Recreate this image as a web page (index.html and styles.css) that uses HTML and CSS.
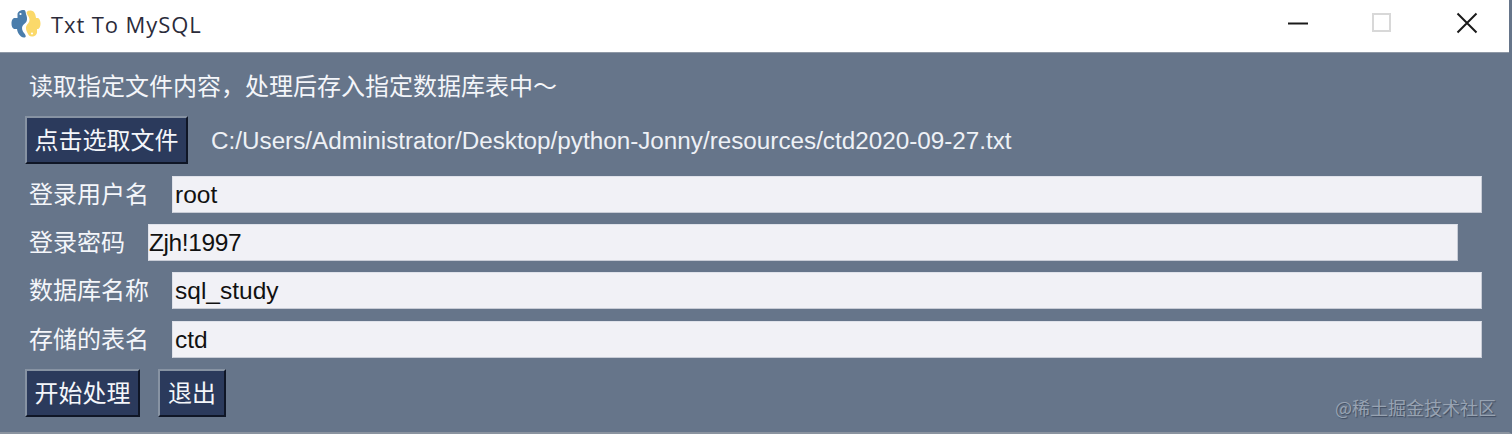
FILE: index.html
```html
<!DOCTYPE html>
<html lang="zh">
<head>
<meta charset="utf-8">
<title>Txt To MySQL</title>
<link rel="stylesheet" href="styles.css">
</head>
<body>
<div class="window">
  <header class="titlebar">
    <svg class="logo" width="30" height="30" viewBox="0 0 30 30">
      <path class="py-blue" d="M13 1c-4 0-6.500 1.800-6.500 4.500V9H3.800C1.500 9 .5 11.500 .5 14.500c0 3 1.300 5.500 3.300 5.500H6c.3 2.500 1.500 5.500 4 7.500 1.600 1.200 3.500 1.500 4.500.5 .8-1-.3-2.500-1.500-4-1.500-2-2.700-4.500-1.500-7 1-2 3-2.500 4-4.500 1-2.500.5-5-.5-7.500C14.600 2.600 14.200 1 13 1z"/>
      <path class="py-yellow" d="M19 1.500c-2.500.2-4 1.500-3 3.500 1 2 2.500 3.500 2.500 6 0 2.800-2.300 4-3.200 6-1 2.500.2 5 1.200 7 .8 1.800 1.800 3.500 4.500 3.500 3 0 5-2 5-4.500V20h.8c1.500 0 2.700-2.500 2.700-5.500S28.300 9 26.500 9H25c-.3-3-1.500-7.900-6-7.500z"/>
      <circle class="py-eye" cx="9.500" cy="5" r="1.100"/>
      <circle class="py-eye" cx="21" cy="24.500" r="1.100"/>
    </svg>
    <span class="title">Txt To MySQL</span>
    <div class="controls">
      <svg class="ctl" width="22" height="22" viewBox="0 0 22 22"><path class="stroke-dark" d="M1 11.500h20"/></svg>
      <svg class="ctl ctl-max" width="20" height="20" viewBox="0 0 20 20"><rect class="stroke-muted" x="1" y="1" width="17" height="17"/></svg>
      <svg class="ctl" width="22" height="22" viewBox="0 0 22 22"><path class="stroke-dark" d="M1.500 1.500l19 19M20.500 1.500l-19 19"/></svg>
    </div>
  </header>
  <main class="app">
    <p class="intro">读取指定文件内容，处理后存入指定数据库表中～</p>
    <div class="file-row">
      <button class="btn btn-file">点击选取文件</button>
      <span class="path">C:/Users/Administrator/Desktop/python-Jonny/resources/ctd2020-09-27.txt</span>
    </div>
    <div class="field field-long">
      <label class="label">登录用户名</label>
      <div class="input">root</div>
    </div>
    <div class="field field-short">
      <label class="label">登录密码</label>
      <div class="input input-tight">Zjh!1997</div>
    </div>
    <div class="field field-long">
      <label class="label">数据库名称</label>
      <div class="input">sql_study</div>
    </div>
    <div class="field field-long field-last">
      <label class="label">存储的表名</label>
      <div class="input">ctd</div>
    </div>
    <div class="actions">
      <button class="btn btn-start">开始处理</button>
      <button class="btn btn-exit">退出</button>
    </div>
    <span class="watermark">@稀土掘金技术社区</span>
  </main>
</div>
</body>
</html>
```
FILE: styles.css
```css
* { box-sizing: border-box; }
html, body { margin: 0; padding: 0; height: 434px; overflow: hidden; background: #66758a; }
.window {
  width: 1512px;
  height: 434px;
  display: flex;
  flex-direction: column;
  font-family: "Liberation Sans", "Noto Sans CJK SC", sans-serif;
}
.titlebar {
  height: 53px;
  flex: none;
  display: flex;
  align-items: center;
  background: #fff;
  padding-left: 11px;
  border-bottom: 1px solid #8e98a6;
  margin-right: 3px;
}
.logo { flex: none; margin-top: -5px; }
.py-blue { fill: #4a7dab; }
.py-yellow { fill: #fbd96a; }
.py-eye { fill: #fff; }
.title {
  margin-left: 10px;
  margin-top: -5px;
  font-family: "Open Sans", sans-serif;
  font-size: 22px;
  letter-spacing: 0.9px;
  color: #2b2b3a;
}
.controls {
  margin-left: auto;
  margin-top: -7px;
  display: flex;
  align-items: center;
  padding-right: 31px;
}
.ctl { flex: none; margin-left: 63px; }
.ctl-max { margin-right: 1px; }
.stroke-dark { fill: none; stroke: #1a1a1a; stroke-width: 2; }
.stroke-muted { fill: none; stroke: #d8d8d8; stroke-width: 2; }
.app {
  position: relative;
  flex: 1;
  padding: 0 0 0 25px;
  background: #66758a;
  border-right: 3px solid #66758a;
  border-bottom: 2px solid #8a939f;
  color: #f4f6fa;
}
.intro {
  margin: 16px 0 0 4px;
  height: 32px;
  line-height: 32px;
  font-family: "Noto Sans CJK SC", sans-serif;
  font-size: 24px;
}
.file-row {
  display: flex;
  align-items: center;
  margin-top: 15px;
  height: 48px;
}
.path {
  margin-left: 23px;
  padding-top: 2px;
  font-size: 24.250px;
  color: #eef1f6;
}
.btn {
  height: 48px;
  padding: 0 0 3px;
  font-family: "Noto Sans CJK SC", sans-serif;
  font-size: 24px;
  color: #f4f6fa;
  background: #2b3a5c;
  border-style: solid;
  border-width: 2px;
  border-color: #8793a3 #0f1626 #0f1626 #8793a3;
}
.btn-file { width: 163px; }
.btn-start { width: 115px; }
.btn-exit { width: 68px; }
.field {
  display: flex;
  align-items: center;
  height: 37px;
  margin-top: 11px;
  padding-left: 4px;
}
.file-row + .field { margin-top: 12px; }
.field-last { margin-top: 12px; }
.label {
  flex: none;
  padding-bottom: 3px;
  font-family: "Noto Sans CJK SC", sans-serif;
  font-size: 24px;
  line-height: 34px;
}
.field-long .label { width: 143px; }
.field-short .label { width: 119px; }
.input {
  width: 1310px;
  height: 37px;
  line-height: 35px;
  padding-left: 2px;
  font-size: 24.500px;
  color: #111;
  background: #f1f1f6;
  border-top: 1px solid #dfe2ea;
  border-left: 1px solid #dfe2ea;
  border-right: 1px solid #c8ccd6;
  border-bottom: 1px solid #c8ccd6;
}
.input-tight { padding-left: 0; letter-spacing: -0.400px; }
.actions {
  display: flex;
  gap: 18px;
  margin-top: 11px;
}
.watermark {
  position: absolute;
  right: 13px;
  bottom: 12px;
  font-family: "Noto Sans CJK SC", sans-serif;
  font-size: 18px;
  color: #98a3b2;
  text-shadow: 1px 1px 1px #3f4c60;
}
```
